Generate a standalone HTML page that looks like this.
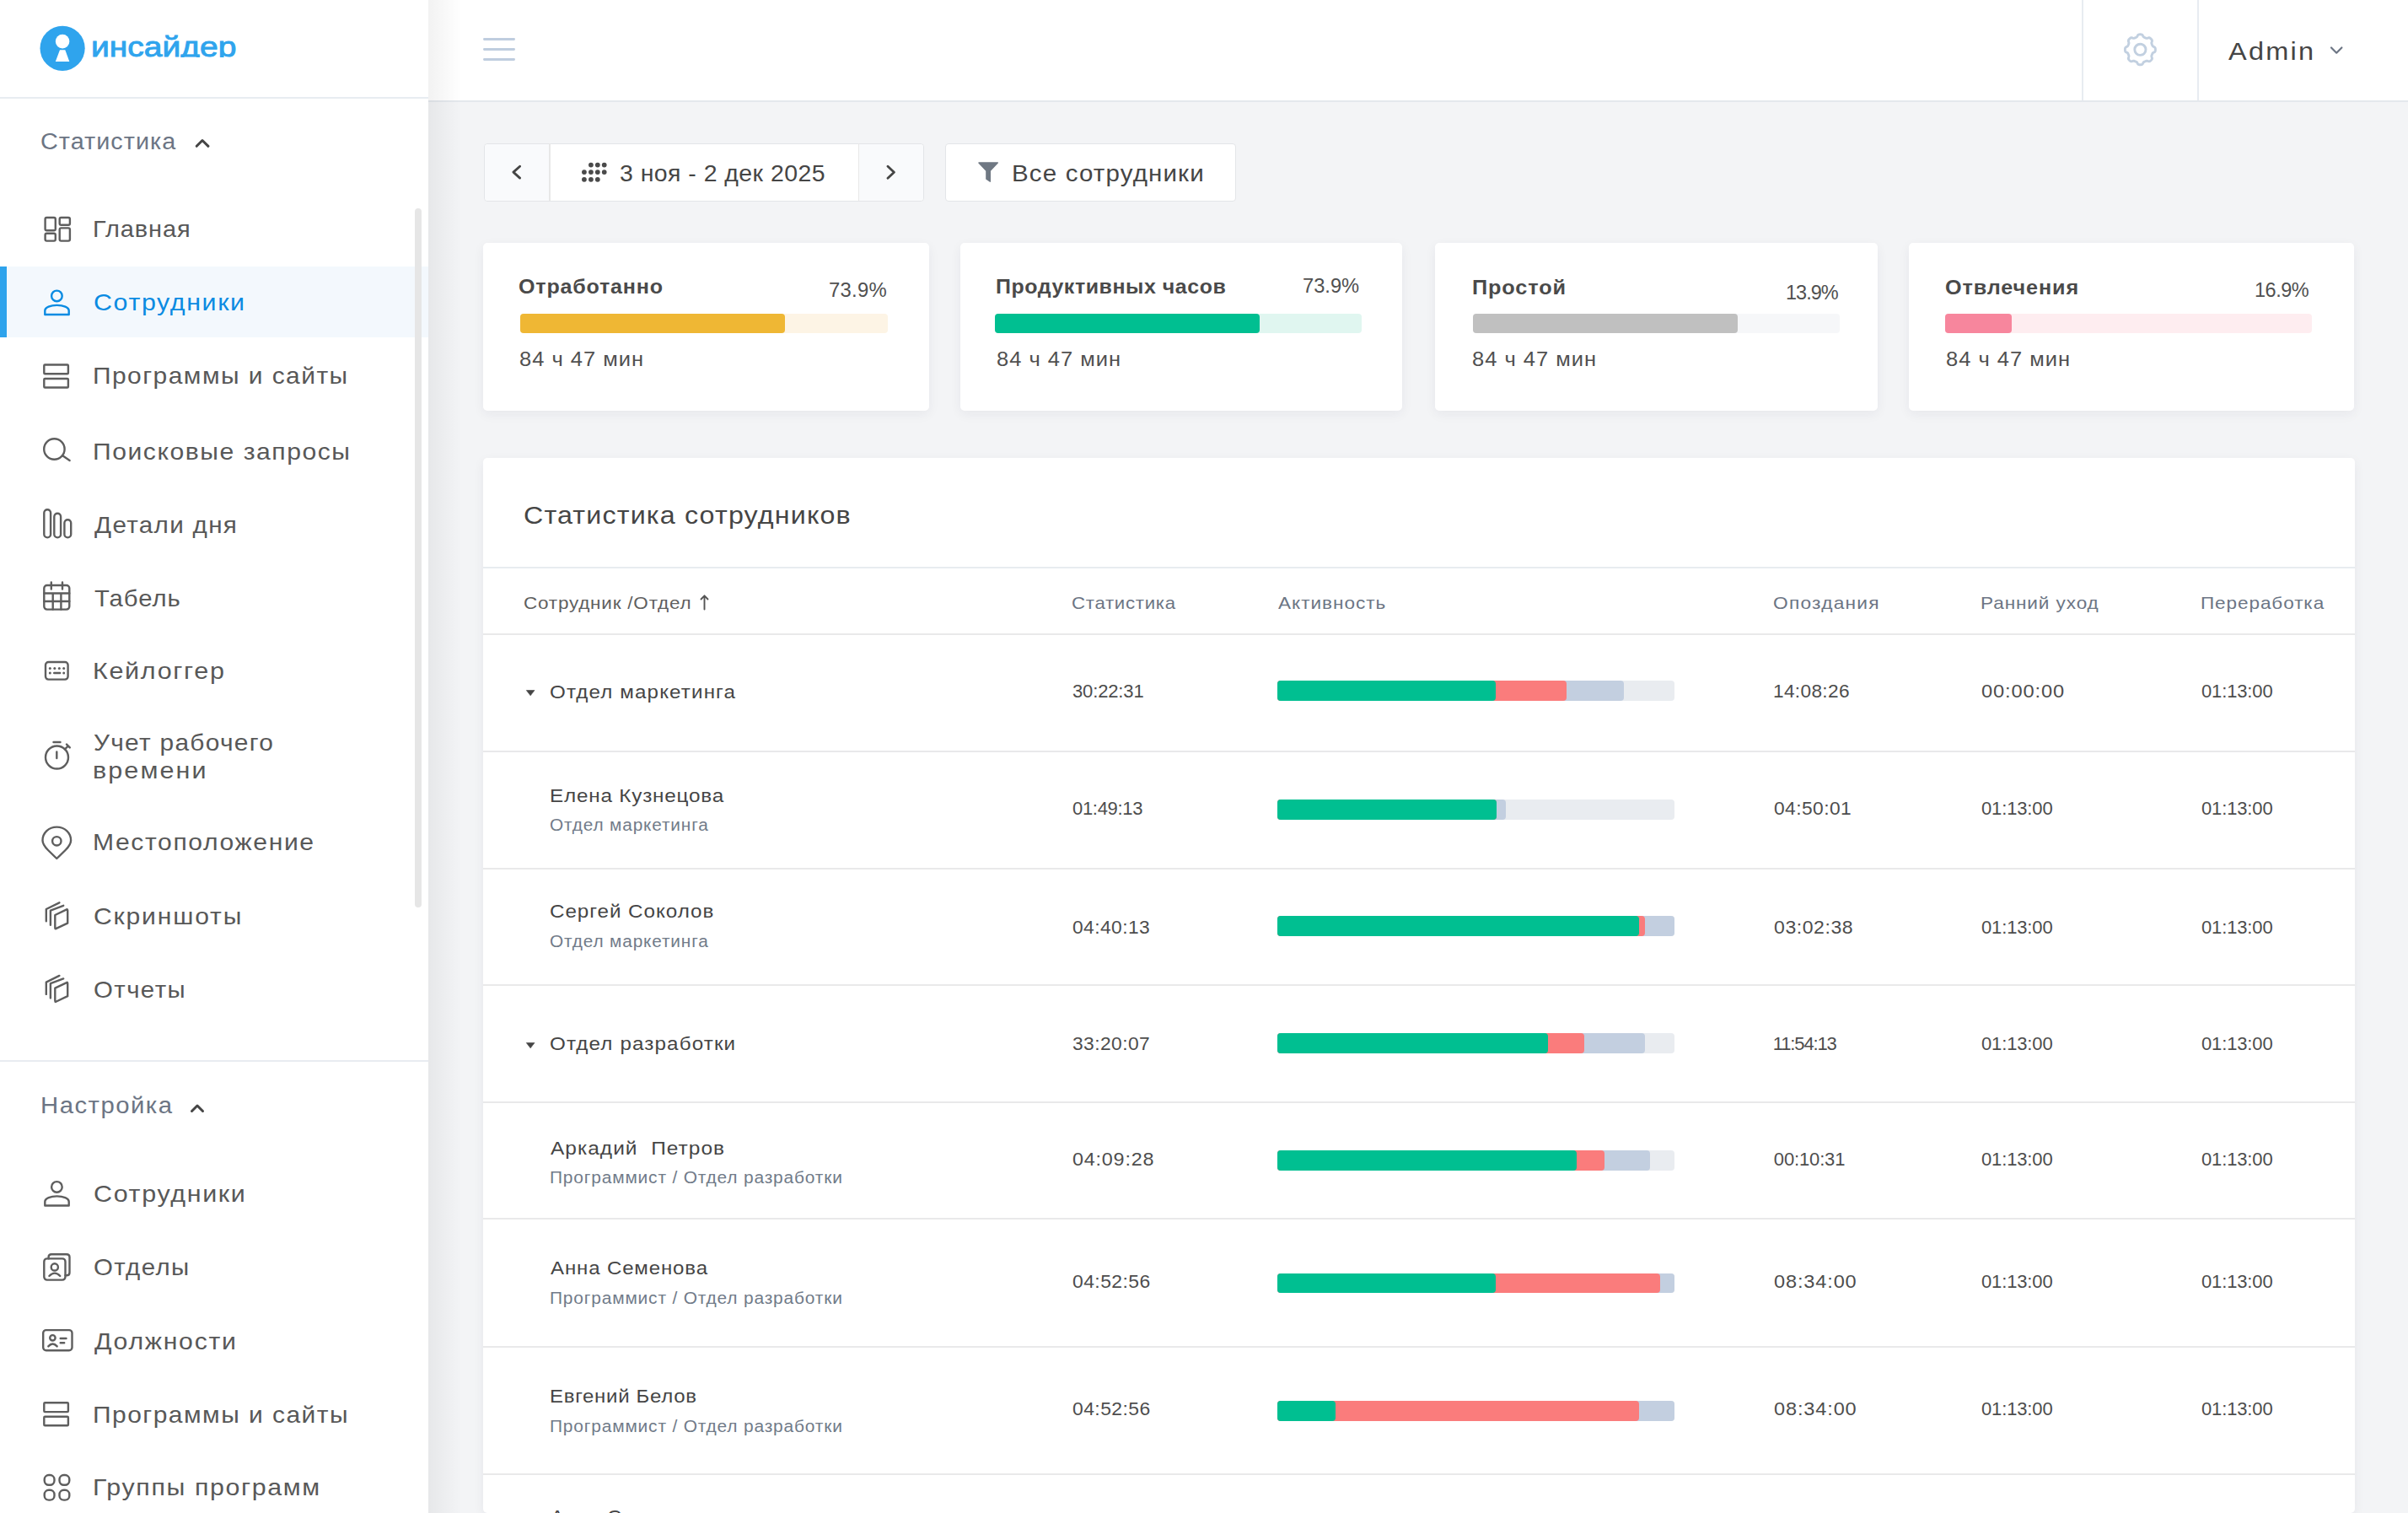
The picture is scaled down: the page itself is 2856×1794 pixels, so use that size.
<!DOCTYPE html><html><head><meta charset="utf-8"><style>
html,body{margin:0;padding:0;}
body{width:2856px;height:1794px;position:relative;overflow:hidden;background:#f3f4f6;font-family:"Liberation Sans",sans-serif;}
.t{position:absolute;white-space:nowrap;line-height:1;transform-origin:0 0;}
.ic{position:absolute;overflow:visible;}
.sidebar{position:absolute;left:0;top:0;width:508px;height:1794px;background:#fff;}
.box{position:absolute;background:#fff;border:1px solid #e3e5e8;border-radius:4px;box-sizing:border-box;}
.card{position:absolute;background:#fff;border-radius:5px;box-shadow:0 4px 14px rgba(30,40,60,0.06);}
.hl{position:absolute;left:573px;width:2220px;height:2px;background:#e9e9ea;}
.bar{position:absolute;left:1515px;height:23.5px;border-radius:4px;}
</style></head><body><div class="sidebar"></div>
<div style="position:absolute;left:0;top:115px;width:508px;height:2px;background:#e8ecf1"></div>
<svg class="ic" style="left:0;top:0" width="300" height="110" viewBox="0 0 300 110">
<circle cx="74.1" cy="57.3" r="26.6" fill="#2fa4ed"/>
<circle cx="74.1" cy="49.1" r="8.3" fill="#fff"/>
<path d="M71 59.3 L77.3 59.3 L82.3 73 L65.8 73 Z" fill="#fff"/>
</svg>
<div style="position:absolute;left:0;top:0;width:320px;height:67.6px;overflow:hidden"><div id="t0" class="t" style="left:108.00px;top:38.64px;font-size:33.50px;font-weight:400;color:#2fa4ed;transform:scaleX(1.1644);-webkit-text-stroke:0.9px #2fa4ed;">инсайдер</div></div>
<div id="t1" class="t" style="left:47.60px;top:154.74px;font-size:27.00px;font-weight:400;color:#6c7584;transform:scaleX(1.0663);letter-spacing:0.948px;">Статистика</div>
<svg class="ic" style="left:225px;top:160px" width="30" height="20" viewBox="225 160 30 20"><path d="M233.2 173.3 L240 166.5 L247 173.3" fill="none" stroke="#454545" stroke-width="3" stroke-linecap="round" stroke-linejoin="round"/></svg>
<div style="position:absolute;left:0;top:316.3px;width:508px;height:83.3px;background:#f3f8fd"></div>
<div style="position:absolute;left:0;top:316.3px;width:8px;height:83.3px;background:#2ea3ec"></div>
<div style="position:absolute;left:492px;top:247px;width:8px;height:829px;border-radius:4px;background:#e6e6e6"></div>
<div id="t2" class="t" style="left:110.00px;top:257.52px;font-size:27.50px;font-weight:400;color:#585858;transform:scaleX(1.0515);letter-spacing:0.872px;">Главная</div>
<div id="t3" class="t" style="left:111.00px;top:344.72px;font-size:27.50px;font-weight:400;color:#0a8be2;transform:scaleX(1.1045);letter-spacing:1.459px;">Сотрудники</div>
<div id="t4" class="t" style="left:110.00px;top:432.22px;font-size:27.50px;font-weight:400;color:#585858;transform:scaleX(1.0897);letter-spacing:1.331px;">Программы и сайты</div>
<div id="t5" class="t" style="left:110.00px;top:521.72px;font-size:27.50px;font-weight:400;color:#585858;transform:scaleX(1.0953);letter-spacing:1.404px;">Поисковые запросы</div>
<div id="t6" class="t" style="left:112.00px;top:608.72px;font-size:27.50px;font-weight:400;color:#585858;transform:scaleX(1.0769);letter-spacing:1.228px;">Детали дня</div>
<div id="t7" class="t" style="left:112.00px;top:695.72px;font-size:27.50px;font-weight:400;color:#585858;transform:scaleX(1.0628);letter-spacing:0.922px;">Табель</div>
<div id="t8" class="t" style="left:110.00px;top:781.72px;font-size:27.50px;font-weight:400;color:#585858;transform:scaleX(1.1091);letter-spacing:1.521px;">Кейлоггер</div>
<div id="t9" class="t" style="left:111.20px;top:867.22px;font-size:27.50px;font-weight:400;color:#585858;transform:scaleX(1.0872);letter-spacing:1.165px;">Учет рабочего</div>
<div id="t10" class="t" style="left:110.20px;top:899.72px;font-size:27.50px;font-weight:400;color:#585858;transform:scaleX(1.1098);letter-spacing:1.877px;">времени</div>
<div id="t11" class="t" style="left:110.20px;top:985.22px;font-size:27.50px;font-weight:400;color:#585858;transform:scaleX(1.0947);letter-spacing:1.469px;">Местоположение</div>
<div id="t12" class="t" style="left:111.20px;top:1072.72px;font-size:27.50px;font-weight:400;color:#585858;transform:scaleX(1.0948);letter-spacing:1.656px;">Скриншоты</div>
<div id="t13" class="t" style="left:111.20px;top:1159.72px;font-size:27.50px;font-weight:400;color:#585858;transform:scaleX(1.0683);letter-spacing:1.329px;">Отчеты</div>
<div style="position:absolute;left:0;top:1257px;width:508px;height:2px;background:#e8ecf1"></div>
<div id="t14" class="t" style="left:47.60px;top:1298.44px;font-size:27.00px;font-weight:400;color:#6c7584;transform:scaleX(1.0856);letter-spacing:1.359px;">Настройка</div>
<svg class="ic" style="left:220px;top:1300px" width="30" height="25" viewBox="220 1300 30 25"><path d="M227.5 1317.5 L234 1311 L240.5 1317.5" fill="none" stroke="#454545" stroke-width="3" stroke-linecap="round" stroke-linejoin="round"/></svg>
<div id="t15" class="t" style="left:111.00px;top:1401.72px;font-size:27.50px;font-weight:400;color:#585858;transform:scaleX(1.1072);letter-spacing:1.495px;">Сотрудники</div>
<div id="t16" class="t" style="left:111.00px;top:1488.72px;font-size:27.50px;font-weight:400;color:#585858;transform:scaleX(1.0701);letter-spacing:1.271px;">Отделы</div>
<div id="t17" class="t" style="left:112.00px;top:1576.72px;font-size:27.50px;font-weight:400;color:#585858;transform:scaleX(1.0982);letter-spacing:1.582px;">Должности</div>
<div id="t18" class="t" style="left:110.00px;top:1663.72px;font-size:27.50px;font-weight:400;color:#585858;transform:scaleX(1.0905);letter-spacing:1.341px;">Программы и сайты</div>
<div id="t19" class="t" style="left:110.00px;top:1750.22px;font-size:27.50px;font-weight:400;color:#585858;transform:scaleX(1.1043);letter-spacing:1.468px;">Группы программ</div>
<svg class="ic" style="left:0;top:0" width="508" height="1794" viewBox="0 0 508 1794" fill="none" stroke="#5e5e5e" stroke-width="2.40" stroke-linecap="round" stroke-linejoin="round"><rect x="53.6" y="258" width="12.2" height="15.3" rx="1.8"/><rect x="70.7" y="258" width="12.2" height="8.8" rx="1.8"/><rect x="53.6" y="276.8" width="12.2" height="8.8" rx="1.8"/><rect x="70.7" y="270.4" width="12.2" height="15.2" rx="1.8"/><rect x="52.3" y="432.5" width="28.6" height="10.8" rx="1"/><rect x="52.3" y="449.0" width="28.6" height="10.5" rx="1"/><circle cx="64.4" cy="532.5" r="12.2"/><path d="M74.6 540.6 L82.6 546"/><rect x="52.3" y="604.2" width="7.8" height="33.2" rx="3.9"/><rect x="64.3" y="608.8" width="7.8" height="28.6" rx="3.9"/><rect x="76.4" y="616.2" width="7.8" height="21.2" rx="3.9"/><rect x="52.3" y="694" width="30" height="28.6" rx="3.5"/><path d="M60.8 690.5 V698.5 M74 690.5 V698.5 M52.3 703.5 H82.3 M52.3 713 H82.3 M62.7 703.5 V722.6 M72.4 703.5 V722.6"/><rect x="54" y="785" width="26.6" height="20.6" rx="3.5"/><path d="M64.2 798 H71.2"/><circle cx="59.3" cy="792.6" r="1.5" fill="#5e5e5e" stroke="none"/><circle cx="64.8" cy="792.6" r="1.5" fill="#5e5e5e" stroke="none"/><circle cx="70.3" cy="792.6" r="1.5" fill="#5e5e5e" stroke="none"/><circle cx="75.7" cy="792.6" r="1.5" fill="#5e5e5e" stroke="none"/><circle cx="59.3" cy="798.0" r="1.5" fill="#5e5e5e" stroke="none"/><circle cx="75.7" cy="798.0" r="1.5" fill="#5e5e5e" stroke="none"/><circle cx="67.5" cy="898" r="13.5"/><path d="M63.5 880 H71.5 M67.3 891.5 V899 M76.8 888.5 L80.5 884.8 M79 882.6 L82.8 886.4"/><path d="M67.3 1018 L57 1008 C52.5 1003.5 50.5 1000.5 50.5 996.5 C50.5 987.2 58 980.6 67.3 980.6 C76.6 980.6 84.1 987.2 84.1 996.5 C84.1 1000.5 82.1 1003.5 77.6 1008 Z"/><circle cx="67.3" cy="997.3" r="5.2"/><path d="M65.3 1085.0 L79.6 1078.2 Q80.2 1078.2 80.2 1079.5 V1094.6 L65.8 1101.4 Q65.3 1101.4 65.3 1100.0 Z"/><path d="M59.9 1096.8 V1079.6 L75.2 1073.8"/><path d="M54.8 1092.3 V1078.0 L70.4 1070.3"/><path d="M65.3 1171.6 L79.6 1164.8 Q80.2 1164.8 80.2 1166.1 V1181.2 L65.8 1188.0 Q65.3 1188.0 65.3 1186.6 Z"/><path d="M59.9 1183.4 V1166.2 L75.2 1160.4"/><path d="M54.8 1178.9 V1164.6 L70.4 1156.9"/><circle cx="67.4" cy="1407.4" r="6.3"/><path d="M53.3 1429.5 V1424.9 C53.3 1420.8 60 1418.4 67.5 1418.4 C75 1418.4 81.7 1420.8 81.7 1424.9 V1429.5 Z"/><rect x="52.3" y="1492.4" width="25.2" height="25.2" rx="3.5"/><path d="M57.6 1492.4 V1490.5 Q57.6 1487.2 61 1487.2 H79 Q82.5 1487.2 82.5 1490.5 V1509 Q82.5 1512.3 79 1512.3 H77.5"/><circle cx="64.8" cy="1502.4" r="4.1"/><path d="M58.4 1513 Q64.9 1506.3 71.3 1513"/><rect x="51.2" y="1577.1" width="34.3" height="24.2" rx="3.5"/><circle cx="62.4" cy="1586.3" r="3.2"/><path d="M57.3 1596.4 Q62.5 1590.6 67.7 1596.4 M71.7 1587 H78.5 M71.7 1592.2 H76.2"/><rect x="52.3" y="1663.3" width="28.6" height="10.8" rx="1"/><rect x="52.3" y="1679.8" width="28.6" height="10.5" rx="1"/><rect x="52.7" y="1749" width="11.8" height="11.8" rx="5.2"/><rect x="70.5" y="1749" width="11.8" height="11.8" rx="5.2"/><rect x="52.7" y="1766.8" width="11.8" height="11.8" rx="5.2"/><rect x="70.5" y="1766.8" width="11.8" height="11.8" rx="5.2"/></svg>
<svg class="ic" style="left:0;top:0" width="508" height="1794" viewBox="0 0 508 1794" fill="none" stroke="#0a8be2" stroke-width="2.40" stroke-linecap="round" stroke-linejoin="round"><circle cx="67.4" cy="350.9" r="6.3"/><path d="M53.3 373.0 V368.4 C53.3 364.3 60 361.9 67.5 361.9 C75 361.9 81.7 364.3 81.7 368.4 V373.0 Z"/></svg>
<div style="position:absolute;left:508px;top:0;width:2348px;height:119px;background:#fff"></div>
<div style="position:absolute;left:508px;top:119px;width:2348px;height:2px;background:#e4e8ed"></div>
<div style="position:absolute;left:2469px;top:0;width:2px;height:119px;background:#e8ecf1"></div>
<div style="position:absolute;left:2606px;top:0;width:2px;height:119px;background:#e8ecf1"></div>
<div style="position:absolute;left:508px;top:0;width:40px;height:1794px;background:linear-gradient(to right, rgba(0,0,0,0.05), rgba(0,0,0,0))"></div>
<svg class="ic" style="left:560px;top:30px" width="70" height="60" viewBox="560 30 70 60" stroke="#bfcddf" stroke-width="2.8" stroke-linecap="round"><path d="M574.4 46.5 H609.6 M574.4 58.5 H609.6 M574.4 70.5 H609.6"/></svg>
<svg class="ic" style="left:2500px;top:20px" width="80" height="80" viewBox="2500 20 80 80" fill="none" stroke="#c2d0e0" stroke-width="2.9"><path d="M2538.40 40.80 L2538.87 40.81 L2539.34 40.85 L2539.81 40.91 L2540.27 41.03 L2540.71 41.25 L2541.12 41.62 L2541.48 42.18 L2541.79 42.86 L2542.09 43.43 L2542.41 43.83 L2542.76 44.10 L2543.11 44.29 L2543.48 44.45 L2543.85 44.61 L2544.22 44.76 L2544.58 44.91 L2544.95 45.06 L2545.33 45.21 L2545.72 45.32 L2546.15 45.38 L2546.66 45.33 L2547.28 45.13 L2547.97 44.87 L2548.63 44.72 L2549.18 44.75 L2549.64 44.92 L2550.05 45.16 L2550.43 45.44 L2550.79 45.75 L2551.13 46.07 L2551.45 46.41 L2551.76 46.77 L2552.04 47.15 L2552.28 47.56 L2552.45 48.02 L2552.48 48.57 L2552.33 49.23 L2552.07 49.92 L2551.87 50.54 L2551.82 51.05 L2551.88 51.48 L2551.99 51.87 L2552.14 52.25 L2552.29 52.62 L2552.44 52.98 L2552.59 53.35 L2552.75 53.72 L2552.91 54.09 L2553.10 54.44 L2553.37 54.79 L2553.77 55.11 L2554.34 55.41 L2555.02 55.72 L2555.58 56.08 L2555.95 56.49 L2556.17 56.93 L2556.29 57.39 L2556.35 57.86 L2556.39 58.33 L2556.40 58.80 L2556.39 59.27 L2556.35 59.74 L2556.29 60.21 L2556.17 60.67 L2555.95 61.11 L2555.58 61.52 L2555.02 61.88 L2554.34 62.19 L2553.77 62.49 L2553.37 62.81 L2553.10 63.16 L2552.91 63.51 L2552.75 63.88 L2552.59 64.25 L2552.44 64.62 L2552.29 64.98 L2552.14 65.35 L2551.99 65.73 L2551.88 66.12 L2551.82 66.55 L2551.87 67.06 L2552.07 67.68 L2552.33 68.37 L2552.48 69.03 L2552.45 69.58 L2552.28 70.04 L2552.04 70.45 L2551.76 70.83 L2551.45 71.19 L2551.13 71.53 L2550.79 71.85 L2550.43 72.16 L2550.05 72.44 L2549.64 72.68 L2549.18 72.85 L2548.63 72.88 L2547.97 72.73 L2547.28 72.47 L2546.66 72.27 L2546.15 72.22 L2545.72 72.28 L2545.33 72.39 L2544.95 72.54 L2544.58 72.69 L2544.22 72.84 L2543.85 72.99 L2543.48 73.15 L2543.11 73.31 L2542.76 73.50 L2542.41 73.77 L2542.09 74.17 L2541.79 74.74 L2541.48 75.42 L2541.12 75.98 L2540.71 76.35 L2540.27 76.57 L2539.81 76.69 L2539.34 76.75 L2538.87 76.79 L2538.40 76.80 L2537.93 76.79 L2537.46 76.75 L2536.99 76.69 L2536.53 76.57 L2536.09 76.35 L2535.68 75.98 L2535.32 75.42 L2535.01 74.74 L2534.71 74.17 L2534.39 73.77 L2534.04 73.50 L2533.69 73.31 L2533.32 73.15 L2532.95 72.99 L2532.58 72.84 L2532.22 72.69 L2531.85 72.54 L2531.47 72.39 L2531.08 72.28 L2530.65 72.22 L2530.14 72.27 L2529.52 72.47 L2528.83 72.73 L2528.17 72.88 L2527.62 72.85 L2527.16 72.68 L2526.75 72.44 L2526.37 72.16 L2526.01 71.85 L2525.67 71.53 L2525.35 71.19 L2525.04 70.83 L2524.76 70.45 L2524.52 70.04 L2524.35 69.58 L2524.32 69.03 L2524.47 68.37 L2524.73 67.68 L2524.93 67.06 L2524.98 66.55 L2524.92 66.12 L2524.81 65.73 L2524.66 65.35 L2524.51 64.98 L2524.36 64.62 L2524.21 64.25 L2524.05 63.88 L2523.89 63.51 L2523.70 63.16 L2523.43 62.81 L2523.03 62.49 L2522.46 62.19 L2521.78 61.88 L2521.22 61.52 L2520.85 61.11 L2520.63 60.67 L2520.51 60.21 L2520.45 59.74 L2520.41 59.27 L2520.40 58.80 L2520.41 58.33 L2520.45 57.86 L2520.51 57.39 L2520.63 56.93 L2520.85 56.49 L2521.22 56.08 L2521.78 55.72 L2522.46 55.41 L2523.03 55.11 L2523.43 54.79 L2523.70 54.44 L2523.89 54.09 L2524.05 53.72 L2524.21 53.35 L2524.36 52.98 L2524.51 52.62 L2524.66 52.25 L2524.81 51.87 L2524.92 51.48 L2524.98 51.05 L2524.93 50.54 L2524.73 49.92 L2524.47 49.23 L2524.32 48.57 L2524.35 48.02 L2524.52 47.56 L2524.76 47.15 L2525.04 46.77 L2525.35 46.41 L2525.67 46.07 L2526.01 45.75 L2526.37 45.44 L2526.75 45.16 L2527.16 44.92 L2527.62 44.75 L2528.17 44.72 L2528.83 44.87 L2529.52 45.13 L2530.14 45.33 L2530.65 45.38 L2531.08 45.32 L2531.47 45.21 L2531.85 45.06 L2532.22 44.91 L2532.58 44.76 L2532.95 44.61 L2533.32 44.45 L2533.69 44.29 L2534.04 44.10 L2534.39 43.83 L2534.71 43.43 L2535.01 42.86 L2535.32 42.18 L2535.68 41.62 L2536.09 41.25 L2536.53 41.03 L2536.99 40.91 L2537.46 40.85 L2537.93 40.81 L2538.40 40.80 Z"/><circle cx="2538.4" cy="58.8" r="6.6"/></svg>
<div id="t20" class="t" style="left:2643.00px;top:45.50px;font-size:29.30px;font-weight:400;color:#454545;transform:scaleX(1.1098);letter-spacing:2.027px;">Admin</div>
<svg class="ic" style="left:2755px;top:50px" width="30" height="20" viewBox="2755 50 30 20"><path d="M2765 56.5 L2771.2 62.7 L2777.4 56.5" fill="none" stroke="#6c7584" stroke-width="2.2" stroke-linecap="round" stroke-linejoin="round"/></svg>
<div class="box" style="left:573.5px;top:169.5px;width:522px;height:69px;"></div>
<div style="position:absolute;left:574.5px;top:170.5px;width:77px;height:67px;background:#f9fafc;border-radius:4px 0 0 4px"></div>
<div style="position:absolute;left:1018.5px;top:170.5px;width:76px;height:67px;background:#f9fafc;border-radius:0 4px 4px 0"></div>
<div style="position:absolute;left:651px;top:170px;width:1.5px;height:68px;background:#e8e8e8"></div>
<div style="position:absolute;left:1017.5px;top:170px;width:1.5px;height:68px;background:#e8e8e8"></div>
<svg class="ic" style="left:600px;top:185px" width="480" height="40" viewBox="600 185 480 40" fill="none" stroke="#454545" stroke-width="2.8" stroke-linecap="round" stroke-linejoin="round"><path d="M616.6 197.2 L608.9 204.1 L616.6 211.1 M1053 197.3 L1060.4 204.3 L1053 211.2"/><circle cx="700.9" cy="195.6" r="2.9" fill="#4a4a4a" stroke="none"/><circle cx="708.8" cy="195.6" r="2.9" fill="#4a4a4a" stroke="none"/><circle cx="716.7" cy="195.6" r="2.9" fill="#4a4a4a" stroke="none"/><circle cx="692.9" cy="204.1" r="2.9" fill="#4a4a4a" stroke="none"/><circle cx="700.9" cy="204.1" r="2.9" fill="#4a4a4a" stroke="none"/><circle cx="708.8" cy="204.1" r="2.9" fill="#4a4a4a" stroke="none"/><circle cx="716.7" cy="204.1" r="2.9" fill="#4a4a4a" stroke="none"/><circle cx="692.9" cy="212.8" r="2.9" fill="#4a4a4a" stroke="none"/><circle cx="700.9" cy="212.8" r="2.9" fill="#4a4a4a" stroke="none"/><circle cx="708.8" cy="212.8" r="2.9" fill="#4a4a4a" stroke="none"/></svg>
<div id="t21" class="t" style="left:735.00px;top:191.56px;font-size:27.40px;font-weight:400;color:#454545;transform:scaleX(1.0378);letter-spacing:0.453px;">3 ноя - 2 дек 2025</div>
<div class="box" style="left:1121px;top:169.5px;width:345px;height:69px;"></div>
<svg class="ic" style="left:1150px;top:185px" width="45" height="40" viewBox="1150 185 45 40"><path d="M1161 192.2 H1183.4 Q1184.6 192.6 1183.8 193.6 L1175 202.8 V215.6 Q1174.6 216.4 1173.6 215.6 L1169.2 212.4 V202.8 L1160.4 193.6 Q1159.8 192.6 1161 192.2 Z" fill="#6f7883"/></svg>
<div id="t22" class="t" style="left:1200.00px;top:191.56px;font-size:27.40px;font-weight:400;color:#454545;transform:scaleX(1.0773);letter-spacing:1.071px;">Все сотрудники</div>
<div class="card" style="left:573px;top:288px;width:529px;height:199px"></div>
<div id="t23" class="t" style="left:615.00px;top:328.28px;font-size:24.00px;font-weight:700;color:#4a4a4a;transform:scaleX(1.0439);letter-spacing:0.776px;">Отработанно</div>
<div id="t24" class="t" style="left:983.00px;top:333.31px;font-size:23.50px;font-weight:400;color:#505050;transform:scaleX(1.0154);letter-spacing:0.246px;">73.9%</div>
<div style="position:absolute;left:617px;top:372px;width:436px;height:23px;border-radius:4px;background:#fdf4e5"></div>
<div style="position:absolute;left:617px;top:372px;width:314px;height:23px;border-radius:4px;background:#efb734"></div>
<div id="t25" class="t" style="left:616.00px;top:415.11px;font-size:23.50px;font-weight:400;color:#505050;transform:scaleX(1.0847);letter-spacing:0.922px;">84 ч 47 мин</div>
<div class="card" style="left:1139px;top:288px;width:524px;height:199px"></div>
<div id="t26" class="t" style="left:1181.00px;top:328.28px;font-size:24.00px;font-weight:700;color:#4a4a4a;transform:scaleX(1.0393);letter-spacing:0.532px;">Продуктивных часов</div>
<div id="t27" class="t" style="left:1545.00px;top:327.81px;font-size:23.50px;font-weight:400;color:#505050;transform:scaleX(1.0077);">73.9%</div>
<div style="position:absolute;left:1180px;top:372px;width:435px;height:23px;border-radius:4px;background:#e0f6f0"></div>
<div style="position:absolute;left:1180px;top:372px;width:314px;height:23px;border-radius:4px;background:#00bf91"></div>
<div id="t28" class="t" style="left:1182.00px;top:414.61px;font-size:23.50px;font-weight:400;color:#505050;transform:scaleX(1.0847);letter-spacing:0.922px;">84 ч 47 мин</div>
<div class="card" style="left:1702px;top:288px;width:525px;height:199px"></div>
<div id="t29" class="t" style="left:1746.20px;top:329.28px;font-size:24.00px;font-weight:700;color:#4a4a4a;transform:scaleX(1.0531);letter-spacing:0.823px;">Простой</div>
<div id="t30" class="t" style="left:2118.00px;top:336.31px;font-size:23.50px;font-weight:400;color:#505050;letter-spacing:-1.000px;">13.9%</div>
<div style="position:absolute;left:1747px;top:372px;width:435px;height:23px;border-radius:4px;background:#f6f7f9"></div>
<div style="position:absolute;left:1747px;top:372px;width:314px;height:23px;border-radius:4px;background:#c0c0c0"></div>
<div id="t31" class="t" style="left:1746.00px;top:414.61px;font-size:23.50px;font-weight:400;color:#505050;transform:scaleX(1.0847);letter-spacing:0.922px;">84 ч 47 мин</div>
<div class="card" style="left:2264px;top:288px;width:528px;height:199px"></div>
<div id="t32" class="t" style="left:2307.00px;top:329.28px;font-size:24.00px;font-weight:700;color:#4a4a4a;transform:scaleX(1.0493);letter-spacing:0.847px;">Отвлечения</div>
<div id="t33" class="t" style="left:2674.00px;top:333.31px;font-size:23.50px;font-weight:400;color:#505050;letter-spacing:-0.500px;">16.9%</div>
<div style="position:absolute;left:2307px;top:372px;width:435px;height:23px;border-radius:4px;background:#feedf0"></div>
<div style="position:absolute;left:2307px;top:372px;width:79px;height:23px;border-radius:4px;background:#f7869d"></div>
<div id="t34" class="t" style="left:2308.00px;top:414.61px;font-size:23.50px;font-weight:400;color:#505050;transform:scaleX(1.0847);letter-spacing:0.922px;">84 ч 47 мин</div>
<div class="card" style="left:573px;top:543px;width:2220px;height:1251px"></div>
<div id="t35" class="t" style="left:621.00px;top:595.61px;font-size:30.00px;font-weight:400;color:#454545;transform:scaleX(1.0737);letter-spacing:1.087px;">Статистика сотрудников</div>
<div class="hl" style="top:671.6px;background:#e8ecf0"></div>
<div id="t36" class="t" style="left:621.00px;top:703.92px;font-size:21.00px;font-weight:400;color:#5f5f5f;transform:scaleX(1.0694);letter-spacing:0.748px;">Сотрудник /Отдел</div>
<svg class="ic" style="left:826px;top:700px" width="20" height="30" viewBox="826 700 20 30"><path d="M835.5 722.5 V706.5 M831.5 710.5 L835.5 706.3 L839.5 710.5" fill="none" stroke="#555" stroke-width="1.9" stroke-linecap="round" stroke-linejoin="round"/></svg>
<div id="t37" class="t" style="left:1271.00px;top:703.92px;font-size:21.00px;font-weight:400;color:#6c7584;transform:scaleX(1.0568);letter-spacing:0.683px;">Статистика</div>
<div id="t38" class="t" style="left:1515.80px;top:703.92px;font-size:21.00px;font-weight:400;color:#6c7584;transform:scaleX(1.0741);letter-spacing:0.921px;">Активность</div>
<div id="t39" class="t" style="left:2102.80px;top:703.92px;font-size:21.00px;font-weight:400;color:#6c7584;transform:scaleX(1.0816);letter-spacing:1.144px;">Опоздания</div>
<div id="t40" class="t" style="left:2349.00px;top:703.92px;font-size:21.00px;font-weight:400;color:#6c7584;transform:scaleX(1.0744);letter-spacing:0.838px;">Ранний уход</div>
<div id="t41" class="t" style="left:2610.00px;top:703.92px;font-size:21.00px;font-weight:400;color:#6c7584;transform:scaleX(1.0736);letter-spacing:0.848px;">Переработка</div>
<div class="hl" style="top:750.5px"></div>
<div class="hl" style="top:889.5px"></div>
<svg class="ic" style="left:615px;top:811px" width="30" height="20" viewBox="0 0 30 20"><path d="M9.3 7.5 H19 L14.15 13.8 Z" fill="#454545" stroke="#454545" stroke-width="0.6" stroke-linejoin="round"/></svg>
<div id="t42" class="t" style="left:652.00px;top:810.41px;font-size:22.20px;font-weight:400;color:#454545;transform:scaleX(1.0866);letter-spacing:1.055px;">Отдел маркетинга</div>
<div id="t43" class="t" style="left:1272.00px;top:809.48px;font-size:22.00px;font-weight:400;color:#4d4d4d;letter-spacing:-0.143px;">30:22:31</div>
<div id="t44" class="t" style="left:2102.80px;top:809.48px;font-size:22.00px;font-weight:400;color:#4d4d4d;transform:scaleX(1.0286);letter-spacing:0.333px;">14:08:26</div>
<div id="t45" class="t" style="left:2350.00px;top:809.48px;font-size:22.00px;font-weight:400;color:#4d4d4d;transform:scaleX(1.0765);letter-spacing:0.796px;">00:00:00</div>
<div id="t46" class="t" style="left:2611.00px;top:809.48px;font-size:22.00px;font-weight:400;color:#4d4d4d;letter-spacing:-0.143px;">01:13:00</div>
<div class="bar" style="top:807.0px;width:471px;background:#e9ecf0"></div>
<div class="bar" style="top:807.0px;width:411.0px;background:#c3cfe0"></div>
<div class="bar" style="top:807.0px;width:343.0px;background:#fa7c7c"></div>
<div class="bar" style="top:807.0px;width:259.0px;background:#00bf91"></div>
<div class="hl" style="top:1028.5px"></div>
<div id="t47" class="t" style="left:652.00px;top:931.78px;font-size:22.70px;font-weight:400;color:#454545;transform:scaleX(1.0685);letter-spacing:0.762px;">Елена Кузнецова</div>
<div id="t48" class="t" style="left:652.00px;top:968.96px;font-size:19.30px;font-weight:400;color:#717b89;transform:scaleX(1.0781);letter-spacing:0.798px;">Отдел маркетинга</div>
<div id="t49" class="t" style="left:1272.00px;top:948.48px;font-size:22.00px;font-weight:400;color:#4d4d4d;letter-spacing:-0.314px;">01:49:13</div>
<div id="t50" class="t" style="left:2103.80px;top:948.48px;font-size:22.00px;font-weight:400;color:#4d4d4d;transform:scaleX(1.0353);letter-spacing:0.414px;">04:50:01</div>
<div id="t51" class="t" style="left:2350.00px;top:948.48px;font-size:22.00px;font-weight:400;color:#4d4d4d;letter-spacing:-0.143px;">01:13:00</div>
<div id="t52" class="t" style="left:2611.00px;top:948.48px;font-size:22.00px;font-weight:400;color:#4d4d4d;letter-spacing:-0.143px;">01:13:00</div>
<div class="bar" style="top:948.0px;width:471px;background:#e9ecf0"></div>
<div class="bar" style="top:948.0px;width:271.0px;background:#c3cfe0"></div>
<div class="bar" style="top:948.0px;width:259.5px;background:#fa7c7c"></div>
<div class="bar" style="top:948.0px;width:259.5px;background:#00bf91"></div>
<div class="hl" style="top:1166.5px"></div>
<div id="t53" class="t" style="left:652.00px;top:1068.78px;font-size:22.70px;font-weight:400;color:#454545;transform:scaleX(1.0662);letter-spacing:0.902px;">Сергей Соколов</div>
<div id="t54" class="t" style="left:652.00px;top:1107.26px;font-size:19.30px;font-weight:400;color:#717b89;transform:scaleX(1.0781);letter-spacing:0.798px;">Отдел маркетинга</div>
<div id="t55" class="t" style="left:1272.00px;top:1088.98px;font-size:22.00px;font-weight:400;color:#4d4d4d;transform:scaleX(1.0353);letter-spacing:0.414px;">04:40:13</div>
<div id="t56" class="t" style="left:2103.80px;top:1088.98px;font-size:22.00px;font-weight:400;color:#4d4d4d;transform:scaleX(1.0471);letter-spacing:0.546px;">03:02:38</div>
<div id="t57" class="t" style="left:2350.00px;top:1088.98px;font-size:22.00px;font-weight:400;color:#4d4d4d;letter-spacing:-0.143px;">01:13:00</div>
<div id="t58" class="t" style="left:2611.00px;top:1088.98px;font-size:22.00px;font-weight:400;color:#4d4d4d;letter-spacing:-0.143px;">01:13:00</div>
<div class="bar" style="top:1086.0px;width:471px;background:#e9ecf0"></div>
<div class="bar" style="top:1086.0px;width:471.0px;background:#c3cfe0"></div>
<div class="bar" style="top:1086.0px;width:436.0px;background:#fa7c7c"></div>
<div class="bar" style="top:1086.0px;width:428.7px;background:#00bf91"></div>
<div class="hl" style="top:1305.5px"></div>
<svg class="ic" style="left:615px;top:1229px" width="30" height="20" viewBox="0 0 30 20"><path d="M9.3 7.5 H19 L14.15 13.8 Z" fill="#454545" stroke="#454545" stroke-width="0.6" stroke-linejoin="round"/></svg>
<div id="t59" class="t" style="left:652.00px;top:1227.41px;font-size:22.20px;font-weight:400;color:#454545;transform:scaleX(1.0892);letter-spacing:1.041px;">Отдел разработки</div>
<div id="t60" class="t" style="left:1272.00px;top:1227.48px;font-size:22.00px;font-weight:400;color:#4d4d4d;transform:scaleX(1.0353);letter-spacing:0.414px;">33:20:07</div>
<div id="t61" class="t" style="left:2102.80px;top:1227.48px;font-size:22.00px;font-weight:400;color:#4d4d4d;letter-spacing:-1.143px;">11:54:13</div>
<div id="t62" class="t" style="left:2350.00px;top:1227.48px;font-size:22.00px;font-weight:400;color:#4d4d4d;letter-spacing:-0.143px;">01:13:00</div>
<div id="t63" class="t" style="left:2611.00px;top:1227.48px;font-size:22.00px;font-weight:400;color:#4d4d4d;letter-spacing:-0.143px;">01:13:00</div>
<div class="bar" style="top:1225.0px;width:471px;background:#e9ecf0"></div>
<div class="bar" style="top:1225.0px;width:436.0px;background:#c3cfe0"></div>
<div class="bar" style="top:1225.0px;width:364.4px;background:#fa7c7c"></div>
<div class="bar" style="top:1225.0px;width:320.8px;background:#00bf91"></div>
<div class="hl" style="top:1443.5px"></div>
<div id="t64" class="t" style="left:653.00px;top:1349.78px;font-size:22.70px;font-weight:400;color:#454545;transform:scaleX(1.0772);letter-spacing:0.961px;">Аркадий&nbsp; Петров</div>
<div id="t65" class="t" style="left:652.00px;top:1387.26px;font-size:19.30px;font-weight:400;color:#717b89;transform:scaleX(1.0853);letter-spacing:0.759px;">Программист / Отдел разработки</div>
<div id="t66" class="t" style="left:1272.00px;top:1363.98px;font-size:22.00px;font-weight:400;color:#4d4d4d;transform:scaleX(1.0618);letter-spacing:0.740px;">04:09:28</div>
<div id="t67" class="t" style="left:2103.80px;top:1363.98px;font-size:22.00px;font-weight:400;color:#4d4d4d;letter-spacing:-0.143px;">00:10:31</div>
<div id="t68" class="t" style="left:2350.00px;top:1363.98px;font-size:22.00px;font-weight:400;color:#4d4d4d;letter-spacing:-0.143px;">01:13:00</div>
<div id="t69" class="t" style="left:2611.00px;top:1363.98px;font-size:22.00px;font-weight:400;color:#4d4d4d;letter-spacing:-0.143px;">01:13:00</div>
<div class="bar" style="top:1364.0px;width:471px;background:#e9ecf0"></div>
<div class="bar" style="top:1364.0px;width:442.2px;background:#c3cfe0"></div>
<div class="bar" style="top:1364.0px;width:388.3px;background:#fa7c7c"></div>
<div class="bar" style="top:1364.0px;width:355.3px;background:#00bf91"></div>
<div class="hl" style="top:1595.5px"></div>
<div id="t70" class="t" style="left:653.00px;top:1491.78px;font-size:22.70px;font-weight:400;color:#454545;transform:scaleX(1.0575);letter-spacing:0.835px;">Анна Семенова</div>
<div id="t71" class="t" style="left:652.00px;top:1530.26px;font-size:19.30px;font-weight:400;color:#717b89;transform:scaleX(1.0853);letter-spacing:0.759px;">Программист / Отдел разработки</div>
<div id="t72" class="t" style="left:1272.00px;top:1509.48px;font-size:22.00px;font-weight:400;color:#4d4d4d;transform:scaleX(1.0412);letter-spacing:0.412px;">04:52:56</div>
<div id="t73" class="t" style="left:2103.80px;top:1509.48px;font-size:22.00px;font-weight:400;color:#4d4d4d;transform:scaleX(1.0706);letter-spacing:0.801px;">08:34:00</div>
<div id="t74" class="t" style="left:2350.00px;top:1509.48px;font-size:22.00px;font-weight:400;color:#4d4d4d;letter-spacing:-0.143px;">01:13:00</div>
<div id="t75" class="t" style="left:2611.00px;top:1509.48px;font-size:22.00px;font-weight:400;color:#4d4d4d;letter-spacing:-0.143px;">01:13:00</div>
<div class="bar" style="top:1509.5px;width:471px;background:#e9ecf0"></div>
<div class="bar" style="top:1509.5px;width:471.0px;background:#c3cfe0"></div>
<div class="bar" style="top:1509.5px;width:454.3px;background:#fa7c7c"></div>
<div class="bar" style="top:1509.5px;width:259.3px;background:#00bf91"></div>
<div class="hl" style="top:1746.5px"></div>
<div id="t76" class="t" style="left:652.00px;top:1643.78px;font-size:22.70px;font-weight:400;color:#454545;transform:scaleX(1.0565);letter-spacing:0.670px;">Евгений Белов</div>
<div id="t77" class="t" style="left:652.00px;top:1682.26px;font-size:19.30px;font-weight:400;color:#717b89;transform:scaleX(1.0853);letter-spacing:0.759px;">Программист / Отдел разработки</div>
<div id="t78" class="t" style="left:1272.00px;top:1660.48px;font-size:22.00px;font-weight:400;color:#4d4d4d;transform:scaleX(1.0412);letter-spacing:0.412px;">04:52:56</div>
<div id="t79" class="t" style="left:2103.80px;top:1660.48px;font-size:22.00px;font-weight:400;color:#4d4d4d;transform:scaleX(1.0706);letter-spacing:0.801px;">08:34:00</div>
<div id="t80" class="t" style="left:2350.00px;top:1660.48px;font-size:22.00px;font-weight:400;color:#4d4d4d;letter-spacing:-0.143px;">01:13:00</div>
<div id="t81" class="t" style="left:2611.00px;top:1660.48px;font-size:22.00px;font-weight:400;color:#4d4d4d;letter-spacing:-0.143px;">01:13:00</div>
<div class="bar" style="top:1661.0px;width:471px;background:#e9ecf0"></div>
<div class="bar" style="top:1661.0px;width:471.0px;background:#c3cfe0"></div>
<div class="bar" style="top:1661.0px;width:429.0px;background:#fa7c7c"></div>
<div class="bar" style="top:1661.0px;width:69.0px;background:#00bf91"></div>
<div id="t82" class="t" style="left:653.00px;top:1786.78px;font-size:22.70px;font-weight:400;color:#454545;transform:scaleX(1.0575);letter-spacing:0.835px;">Анна Семенова</div></body></html>
